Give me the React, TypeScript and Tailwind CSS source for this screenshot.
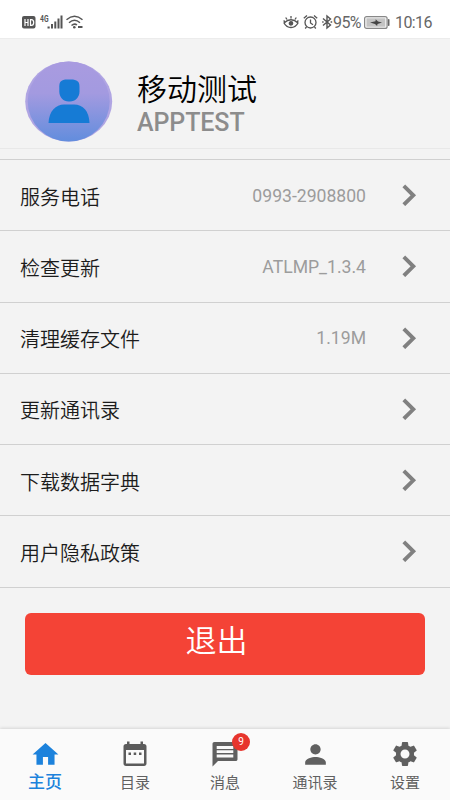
import React from "react";
import { MdHome, MdPerson, MdSettings } from "react-icons/md";

interface SettingRow {
  label: string;
  value?: string;
}

const rows: SettingRow[] = [
  { label: "服务电话", value: "0993-2908800" },
  { label: "检查更新", value: "ATLMP_1.3.4" },
  { label: "清理缓存文件", value: "1.19M" },
  { label: "更新通讯录" },
  { label: "下载数据字典" },
  { label: "用户隐私政策" },
];

function SignalIcons() {
  return (
    <svg width="64" height="18" viewBox="0 0 64 18" fill="none">
      <rect x="0" y="3" width="13.5" height="12.500" rx="2" fill="#555" />
      <path d="M3 6v7M6 6v7M3 9.500h3M8.500 6.600v5.800h.8q2.400 0 2.400-2.900t-2.400-2.900z" stroke="#fff" strokeWidth="1.200" />
      <g fill="#555">
        <rect x="25.500" y="13.500" width="2.200" height="2" />
        <rect x="29" y="11" width="2" height="4.500" />
        <rect x="32.300" y="8.500" width="2" height="7" />
        <rect x="35.500" y="5.500" width="2" height="10" />
        <rect x="38.500" y="2.500" width="2" height="13" />
      </g>
      <g stroke="#555" strokeWidth="1.500">
        <path d="M44.500 6.700Q52.500 -.1 60.500 6.700M47 9.700Q52.500 4.900 58 9.700M49.500 12.500Q52.500 10 55 12" />
        <path d="M56 14h4.500" strokeWidth="2" />
      </g>
      <circle cx="52.300" cy="14.300" r="1.300" fill="#555" />
      <text x="18" y="8.500" fill="#555" fontSize="9" fontWeight="700" fontFamily="Roboto, sans-serif" textLength="8.500" lengthAdjust="spacingAndGlyphs">4G</text>
    </svg>
  );
}

function EyeIcon() {
  return (
    <svg width="16" height="16" viewBox="0 0 16 16" fill="none" stroke="#555" strokeWidth="1.300">
      <path d="M1 9Q8 2.500 15 9Q12.500 13.500 8 13.500T1 9z" />
      <path d="M8 4.500V2M4 5.500L2.700 3.500M12 5.500l1.300-2M2 8L.6 6.500M14 8l1.400-1.500" />
      <circle cx="8" cy="9.300" r="1.700" fill="#555" />
    </svg>
  );
}

function AlarmIcon() {
  return (
    <svg width="15" height="16" viewBox="0 0 15 16" fill="none" stroke="#555" strokeWidth="1.300">
      <circle cx="7.500" cy="8.500" r="5.500" />
      <path d="M7.500 5.500v3.500l2.500 1.800M.8 4.300L4 1.500M14.200 4.300L11 1.500M3.500 13l-1.300 1.500M11.500 13l1.300 1.500" />
    </svg>
  );
}

function BluetoothIcon() {
  return (
    <svg width="11" height="16" viewBox="0 0 11 16" fill="none" stroke="#555" strokeWidth="1.400">
      <path d="M1 4.500l7.500 6.500L5 14V2l3.500 3L1 11.500M.2 8h1.400M8.600 8h1.600" />
    </svg>
  );
}

function BatteryIcon() {
  return (
    <svg width="26" height="13" viewBox="0 0 26 13">
      <rect x=".6" y=".6" width="22.500" height="11.800" rx="2" fill="#f4f4f4" stroke="#888" strokeWidth="1.200" />
      <rect x="2.500" y="2.300" width="18.700" height="8.400" fill="#c4c4c4" />
      <path d="M6 6.500l5.500-1.200.2-2.100 2.300 2.200 4 1.100-4.500 1.500-.4 2.100-2.100-2.200z" fill="#444" />
      <rect x="23.900" y="3" width="1.600" height="7" rx=".8" fill="#666" />
    </svg>
  );
}

function StatusBar() {
  return (
    <header className="flex h-[39px] shrink-0 items-start justify-between border-b border-[#ececec] bg-white pt-[13px] pr-[18px] pl-[22px] text-[#666]">
      <SignalIcons />
      <div className="flex h-[18px] items-center">
        <EyeIcon />
        <span className="ml-1 flex"><AlarmIcon /></span>
        <span className="ml-1 flex"><BluetoothIcon /></span>
        <span className="w-[28px] pt-[2px] text-[16px] whitespace-nowrap tracking-[-0.6px]">95%</span>
        <span className="ml-[3px] flex"><BatteryIcon /></span>
        <span className="ml-[5px] w-[37px] pt-[2px] text-[16px] tracking-[-0.6px]">10:16</span>
      </div>
    </header>
  );
}

function Avatar() {
  return (
    <svg width="88" height="81" viewBox="0 0 88 81" className="shrink-0">
      <defs>
        <linearGradient id="avatar" x1="0" y1="0" x2="0" y2="1">
          <stop offset="0" stopColor="#a99be0" />
          <stop offset=".4" stopColor="#a39ae0" />
          <stop offset="1" stopColor="#628ddd" />
        </linearGradient>
      </defs>
      <ellipse cx="43.700" cy="40.500" rx="43.500" ry="40" fill="#b0a5e3" />
      <ellipse cx="43.700" cy="40.500" rx="41" ry="40" fill="url(#avatar)" />
      <path d="M42 18.500h4c6 0 8.500 2 8.500 7v5c0 6-4.500 10-9.500 10h-1.500c-5 0-9.200-4-9.200-10v-5c0-5 2-7 7.700-7z" fill="#167bd5" />
      <path d="M23.500 62C24 50 31 43.500 39 43.500h10C58 43.500 64 50 64.500 62z" fill="#167bd5" />
    </svg>
  );
}

function Chevron() {
  return (
    <svg width="15" height="22" viewBox="0 0 15 22" fill="none" stroke="#808080" strokeWidth="3.900">
      <path d="M1.800 1.900l9.500 9.400L1.800 20.700" />
    </svg>
  );
}

function CalendarIcon() {
  return (
    <svg width="24" height="26" viewBox="0 0 24 26" fill="#5b5b5b">
      <path fillRule="evenodd" d="M4 .5h2.500V3h11V.5H20V3h1c1.600 0 2.500.9 2.500 2.500v17c0 1.600-.9 2.500-2.500 2.500H3C1.400 25 .5 24.100 .5 22.500v-17C.5 3.900 1.400 3 3 3h1zM3 9v13.500h18V9z" />
      <path d="M5.500 11.500H8V14H5.500zM10.700 11.500h2.500V14h-2.500zM16 11.500h2.500V14H16z" />
    </svg>
  );
}

function MessageIcon() {
  return (
    <svg width="26" height="26" viewBox="0 0 26 26" fill="#606060">
      <path fillRule="evenodd" d="M2.500 1h21C25 1 25.500 1.700 25.500 3v15c0 1.400-.6 2-2 2H6l-5.500 5.500V3C.5 1.700 1.200 1 2.500 1zM4.700 5v3h16.600V5zm0 4.300v2.800h16.600V9.300zm0 4.100v3h16.600v-3z" />
    </svg>
  );
}

const tabs = [
  { label: "主页", icon: <MdHome size={31} /> },
  { label: "目录", icon: <CalendarIcon /> },
  { label: "消息", icon: <MessageIcon />, badge: 9 },
  { label: "通讯录", icon: <MdPerson size={31} /> },
  { label: "设置", icon: <MdSettings size={30} /> },
];

function TabBar() {
  return (
    <nav className="flex h-[71px] shrink-0 bg-[#fafafa] shadow-[0_-1px_3px_rgba(0,0,0,0.12)]">
      {tabs.map((tab, i) => (
        <button
          key={tab.label}
          className={
            i === 0
              ? "flex flex-1 flex-col items-center text-[17px] font-medium text-[#1c82dc]"
              : "flex flex-1 flex-col items-center text-[15px] text-[#606060]"
          }
        >
          <span className="relative mt-2 flex h-[34px] items-center">
            {tab.icon}
            {tab.badge && (
              <span className="absolute -top-[4px] left-[20px] flex size-[18px] items-center justify-center rounded-full bg-[#e7352d] text-[10px] leading-none font-normal text-white">
                {tab.badge}
              </span>
            )}
          </span>
          <span className={i === 0 ? "leading-[22px]" : "pt-px leading-[22px]"}>{tab.label}</span>
        </button>
      ))}
    </nav>
  );
}

export default function App() {
  return (
    <div className="flex h-[800px] w-[450px] flex-col overflow-hidden bg-[#f3f3f3] font-[Roboto,'Noto_Sans_CJK_SC',sans-serif]">
      <StatusBar />
      <main className="flex-1">
        <section className="flex h-[110px] items-start border-b border-[#e8e8e8] pt-[22px] pl-[25px]">
          <Avatar />
          <div className="ml-[24px] pt-[9px]">
            <h1 className="text-[30px] leading-[40px] font-[350] text-black">移动测试</h1>
            <p className="text-[25px] leading-[26px] font-medium tracking-[-0.1px] text-[#8c8c8c]">APPTEST</p>
          </div>
        </section>
        <ul className="mt-[10px] border-t border-[#d0d0d0]">
          {rows.map(row => (
            <li
              key={row.label}
              className="flex h-[71.250px] items-center border-b border-[#d0d0d0] pr-[33px] pl-5"
            >
              <span className="pt-[5px] text-[20px] font-[350] text-[#1c1c1c]">{row.label}</span>
              <span className="mr-[36px] ml-auto pt-[2px] text-[17.600px] text-[#9c9c9c]">{row.value}</span>
              <Chevron />
            </li>
          ))}
        </ul>
        <button className="mx-[25px] mt-[25px] flex h-[62px] w-[400px] items-center justify-center rounded-md bg-[#f44336] pr-[17px] pb-[3px] text-[31px] font-[350] text-white">
          退出
        </button>
      </main>
      <TabBar />
    </div>
  );
}
